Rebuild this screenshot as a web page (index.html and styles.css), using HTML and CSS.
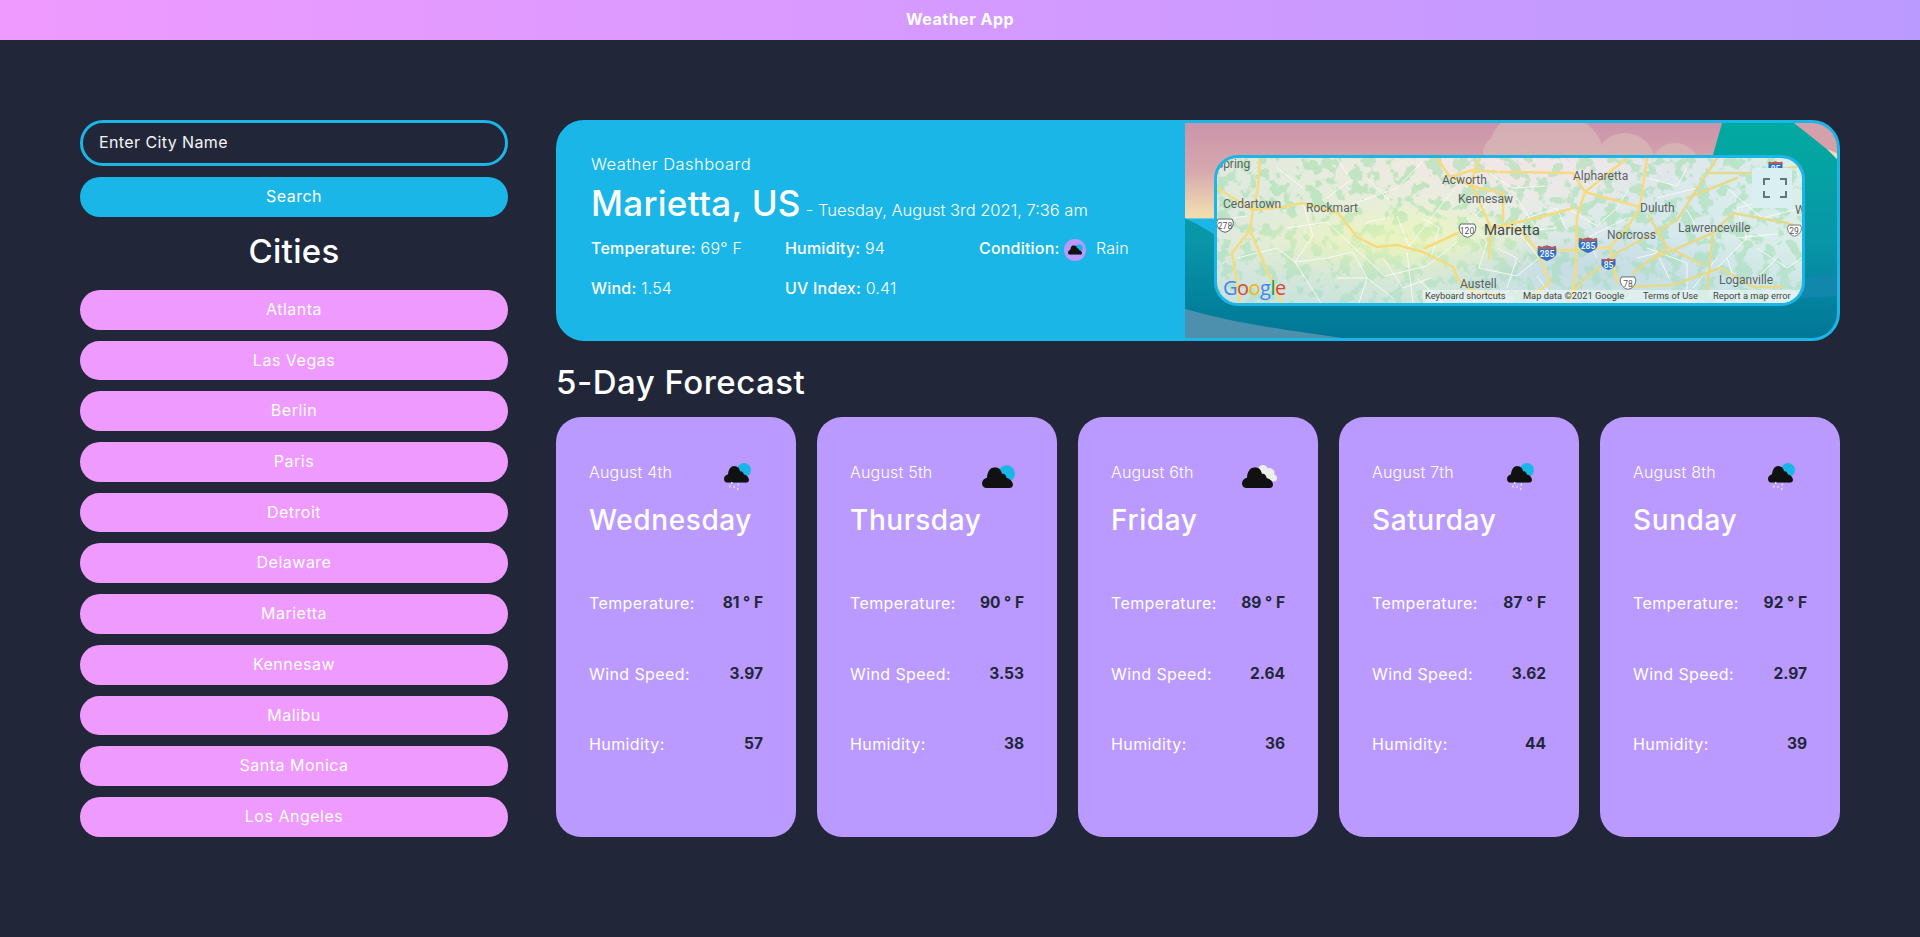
FILE: index.html
```html
<!DOCTYPE html>
<html lang="en">
<head>
  <meta charset="UTF-8">
  <title>Weather App</title>
  <link rel="stylesheet" href="styles.css">
</head>
<body>
  <svg class="defs" width="0" height="0" aria-hidden="true">
    <defs>
      <symbol id="cloud" viewBox="0 0 93 62" preserveAspectRatio="none">
        <path d="M12 62C5 62 0 55 0 48 0 40 6 33 15 31 16 12 26 0 38 0 50 0 58 8 60 20 66 17 72 22 74 32 82 33 93 42 93 52 93 58 88 62 82 62Z" fill="#111"/>
      </symbol>
      <symbol id="interstate" viewBox="0 0 20 16">
        <path d="M1 1 5 2 10 .5 15 2 19 1 19.500 8C19.500 12 14 14.500 10 16 6 14.500 .5 12 .5 8Z" fill="#2f72c4"/>
        <path d="M1 1 5 2 10 .5 15 2 19 1 19.300 4H.7Z" fill="#b9575a"/>
      </symbol>
      <symbol id="ushwy" viewBox="0 0 18 15">
        <path d="M2 1H16L17.300 4C17.500 8 15 13 9 14.300 3 13 .5 8 .7 4Z" fill="#fff" stroke="#5c6468"/>
      </symbol>
      <filter id="patches" x="0" y="0" width="100%" height="100%" color-interpolation-filters="sRGB">
        <feTurbulence type="fractalNoise" baseFrequency="0.075" numOctaves="3" seed="7"/>
        <feColorMatrix values="0 0 0 0 .6  0 0 0 0 .87  0 0 0 0 .66  14 0 0 0 -7.300"/>
      </filter>
      <radialGradient id="map-pink" cx=".5" cy=".02" r=".42">
        <stop offset="0" stop-color="#f3e6e8"/>
        <stop offset="1" stop-color="#f3e6e8" stop-opacity="0"/>
      </radialGradient>
      <radialGradient id="map-yellow" cx=".3" cy=".6" r=".3">
        <stop offset="0" stop-color="#eef7b0" stop-opacity=".7"/>
        <stop offset="1" stop-color="#eef7b0" stop-opacity="0"/>
      </radialGradient>
      <radialGradient id="map-urban" cx=".62" cy=".75" r=".3">
        <stop offset="0" stop-color="#c8dbe6" stop-opacity=".9"/>
        <stop offset="1" stop-color="#c8dbe6" stop-opacity="0"/>
      </radialGradient>
      <linearGradient id="map-base" x1="0" y1="0" x2="1" y2="0">
        <stop offset="0" stop-color="#dfe9df"/>
        <stop offset=".35" stop-color="#e8f0d6"/>
        <stop offset=".55" stop-color="#e4ece6"/>
        <stop offset=".75" stop-color="#d6e8ec"/>
        <stop offset="1" stop-color="#dceeea"/>
      </linearGradient>
      <linearGradient id="map-blue" x1="0" y1="0" x2="0" y2="1">
        <stop offset=".55" stop-color="#b6dcdc" stop-opacity="0"/>
        <stop offset="1" stop-color="#b6dcdc" stop-opacity=".55"/>
      </linearGradient>
      <linearGradient id="art-sky" x1="0" y1="0" x2="0" y2="1">
        <stop offset="0" stop-color="#cb94aa"/>
        <stop offset=".5" stop-color="#d6a8ae"/>
        <stop offset=".95" stop-color="#f0dcb0"/>
      </linearGradient>
      <linearGradient id="art-teal" x1="0" y1="0" x2="0" y2="1">
        <stop offset="0" stop-color="#02aaa0"/>
        <stop offset=".55" stop-color="#0896a8"/>
        <stop offset="1" stop-color="#007696"/>
      </linearGradient>
    </defs>
  </svg>

  <header class="app-header">Weather App</header>

  <main class="layout">
    <aside class="sidebar">
      <input class="city-input" type="text" placeholder="Enter City Name">
      <button class="search-btn">Search</button>
      <h2 class="cities-title">Cities</h2>
      <ul class="city-list">
        <li class="city">Atlanta</li>
        <li class="city">Las Vegas</li>
        <li class="city">Berlin</li>
        <li class="city">Paris</li>
        <li class="city">Detroit</li>
        <li class="city">Delaware</li>
        <li class="city">Marietta</li>
        <li class="city">Kennesaw</li>
        <li class="city">Malibu</li>
        <li class="city">Santa Monica</li>
        <li class="city">Los Angeles</li>
      </ul>
    </aside>

    <section class="content">
      <div class="hero">
        <div class="hero-info">
          <p class="hero-label">Weather Dashboard</p>
          <h1 class="hero-city">Marietta, US<small class="hero-date">- Tuesday, August 3rd 2021, 7:36 am</small></h1>
          <div class="hero-stats">
            <p class="stat"><b>Temperature:</b> 69° F</p>
            <p class="stat"><b>Humidity:</b> 94</p>
            <p class="stat"><b>Condition:</b>
              <span class="cond-icon"><svg width="15" height="11" viewBox="0 0 33 23"><circle cx="24" cy="8.500" r="8.300" fill="#1bb6e8"/><use href="#cloud" y="2.300" width="31" height="20.700"/></svg></span>
              Rain</p>
            <p class="stat"><b>Wind:</b> 1.54</p>
            <p class="stat"><b>UV Index:</b> 0.41</p>
          </div>
        </div>

        <div class="hero-visual">
          <svg class="hero-art" viewBox="0 0 652 214" preserveAspectRatio="none" aria-hidden="true">
            <rect width="652" height="95" fill="url(#art-sky)"/>
            <g fill="#dcc2bc" opacity=".55">
              <circle cx="345" cy="30" r="42"/>
              <circle cx="380" cy="32" r="38"/>
              <circle cx="315" cy="30" r="17"/>
              <circle cx="440" cy="40" r="30"/>
              <circle cx="490" cy="45" r="25"/>
            </g>
            <path d="M0 95C12 100 22 106 40 118L520 60 537 0H652V214H0Z" fill="url(#art-teal)"/>
            <path d="M609 0 652 34V0Z" fill="#d4a0ac"/>
            <path d="M642 26 652 36V30Z" fill="#f0dcb0"/>
            <path d="M0 185C50 200 110 207 157 214H0Z" fill="#4d90ad"/>
            <path d="M560 170C590 160 630 150 652 150V172C620 175 590 175 560 170Z" fill="#1187ad"/>
          </svg>

          <svg class="map" viewBox="0 0 585 145">
            <rect width="585" height="145" fill="url(#map-base)"/>
            <rect width="585" height="145" fill="url(#map-pink)"/>
            <rect width="585" height="145" fill="url(#map-urban)"/>
            <rect width="585" height="145" filter="url(#patches)" opacity=".5"/>
            <rect width="585" height="145" fill="url(#map-yellow)"/>
            <rect width="585" height="145" fill="url(#map-blue)"/>

            <!-- minor roads -->
            <g fill="none" stroke="#fbfbf4" stroke-width="1" opacity=".9">
              <path d="M70 70 110 64 140 92 168 118 210 108 240 84M136 46 180 30 205 4M150 120 142 145M190 94 196 145M180 58 192 88 222 50 238 30"/>
              <path d="M86 45 96 78 78 104 110 100 136 94 150 120M20 100 60 90 78 104 104 145M200 120 226 145M172 60 150 64 146 70"/>
              <path d="M250 60 270 84 262 110 300 118 322 100 300 72M276 40 258 58M320 118 340 145M268 12 295 30 328 28"/>
              <path d="M430 90 470 105 470 145M440 40 480 30M500 110 530 80 520 50 560 40M520 130 510 100M350 50 380 68 400 50 412 30M452 120 440 95 420 100M540 90 570 110 585 100"/>
              <path d="M120 0 134 22 110 40M60 10 86 30M0 62 30 58M150 20 172 42M205 60 222 70 214 100M166 100 186 130 214 120M120 120 150 120 176 140"/>
              <path d="M280 90 300 100 290 130M310 60 340 50 350 72M300 40 320 72 340 70M380 100 370 80 410 60M430 20 460 28 470 10M480 70 470 52M510 30 545 60 585 50M540 120 560 100M520 80 560 76M476 130 500 100"/>
            </g>

            <!-- highways -->
            <g fill="none" stroke="#f5db80" stroke-width="2.500" stroke-linejoin="round" stroke-linecap="round">
              <path d="M65 49 86 45 121 55 140 79 160 89 180 87 206 94 236 109 241 122 260 135 283 137"/>
              <path d="M208 90 241 75M0 30 36 52 65 49M36 52 33 72 51 115 65 145M33 72 15 95 23 145M43 0 41 30 36 52"/>
              <path d="M220 0 233 19 262 30 286 35 286 62M283 14 356 15 368 34 410 0M368 34 360 59 358 122 352 145"/>
              <path d="M233 19 256 12 280 14M262 0 254 25 274 70 272 100M303 72 320 92 360 92 393 89 400 125M290 69 303 72M320 92 333 125 313 139"/>
              <path d="M368 34 423 49 430 0M423 49 410 70 393 89M274 70 320 60 356 50"/>
            </g>
            <g fill="none" stroke="#e6d98b" stroke-width="2.500" stroke-linejoin="round" stroke-linecap="round">
              <path d="M500 0 460 62 400 95 366 122 350 145M490 15 536 15 585 8M416 115 450 89 486 107"/>
              <path d="M496 75 490 132M433 102 496 75 516 55 570 65 585 70M413 129 456 127 503 110 536 129 566 129"/>
              <path d="M450 89 432 58M470 40 520 20"/>
            </g>

            <!-- town labels -->
            <g class="map-label">
              <text x="-1" y="10">Spring</text>
              <text x="6" y="50">Cedartown</text>
              <text x="89" y="54">Rockmart</text>
              <text x="225" y="26">Acworth</text>
              <text x="241" y="45">Kennesaw</text>
              <text x="243" y="130">Austell</text>
              <text x="356" y="22">Alpharetta</text>
              <text x="423" y="54">Duluth</text>
              <text x="390" y="81">Norcross</text>
              <text x="461" y="74">Lawrenceville</text>
              <text x="502" y="126">Loganville</text>
              <text x="578" y="56">W</text>
              <text class="map-city" x="267" y="77">Marietta</text>
            </g>

            <!-- road shields -->
            <use href="#ushwy" x="-1" y="60" width="18" height="15"/>
            <use href="#ushwy" x="240" y="65" width="21" height="15"/>
            <use href="#ushwy" x="402" y="118" width="18" height="14"/>
            <use href="#ushwy" x="570" y="65" width="15" height="15"/>
            <use href="#interstate" x="320" y="87" width="20" height="16"/>
            <use href="#interstate" x="361" y="79" width="20" height="16"/>
            <use href="#interstate" x="384" y="98" width="15" height="16"/>
            <use href="#interstate" x="551" y="2" width="15" height="14"/>
            <g class="shield-num">
              <text x="8" y="71">278</text>
              <text x="250" y="76">120</text>
              <text x="411" y="129">78</text>
              <text x="577" y="76">29</text>
            </g>
            <g class="shield-num shield-white">
              <text x="330" y="99">285</text>
              <text x="371" y="91">285</text>
              <text x="391.500" y="110">85</text>
              <text x="558.500" y="14">85</text>
            </g>

            <!-- controls -->
            <rect x="535" y="10" width="40" height="40" rx="2" fill="#d9eff2"/>
            <path d="M547 27V21H553M563 21H569V27M569 33V39H563M553 39H547V33" fill="none" stroke="#5f7880" stroke-width="2"/>

            <rect x="206" y="132" width="379" height="13" fill="#fff" opacity=".45"/>
            <g class="map-attr">
              <text x="208" y="141">Keyboard shortcuts</text>
              <text x="306" y="141">Map data ©2021 Google</text>
              <text x="426" y="141">Terms of Use</text>
              <text x="496" y="141">Report a map error</text>
            </g>
            <text class="map-logo" x="6" y="137"><tspan fill="#4285f4">G</tspan><tspan fill="#db4437">o</tspan><tspan fill="#f4b400">o</tspan><tspan fill="#4285f4">g</tspan><tspan fill="#0f9d58">l</tspan><tspan fill="#db4437">e</tspan></text>
          </svg>
        </div>
      </div>

      <h2 class="forecast-title">5-Day Forecast</h2>

      <div class="forecast">
        <article class="card">
          <div class="card-top">
            <span class="card-date">August 4th</span>
            <svg class="icon icon-rain" viewBox="0 0 30 30"><circle cx="21" cy="7" r="7" fill="#1bb6e8"/><use href="#cloud" x="1" y="3" width="25" height="16.700"/><path d="M9 19 8.500 21M7.200 22.500 6.700 24.500M11.300 22.800 10.800 24.800M15.500 20.500 15 22.500M15 25 14.500 27" stroke="#ece6f8" stroke-width="1.300" fill="none"/></svg>
          </div>
          <h3 class="card-day">Wednesday</h3>
          <dl class="card-rows">
            <div class="card-row"><dt>Temperature:</dt><dd>81 ° F</dd></div>
            <div class="card-row"><dt>Wind Speed:</dt><dd>3.97</dd></div>
            <div class="card-row"><dt>Humidity:</dt><dd>57</dd></div>
          </dl>
        </article>

        <article class="card">
          <div class="card-top">
            <span class="card-date">August 5th</span>
            <svg class="icon icon-cloud" viewBox="0 0 33 23"><circle cx="24.700" cy="8.500" r="8.300" fill="#1bb6e8"/><use href="#cloud" y="2.300" width="31" height="20.700"/></svg>
          </div>
          <h3 class="card-day">Thursday</h3>
          <dl class="card-rows">
            <div class="card-row"><dt>Temperature:</dt><dd>90 ° F</dd></div>
            <div class="card-row"><dt>Wind Speed:</dt><dd>3.53</dd></div>
            <div class="card-row"><dt>Humidity:</dt><dd>38</dd></div>
          </dl>
        </article>

        <article class="card">
          <div class="card-top">
            <span class="card-date">August 6th</span>
            <svg class="icon icon-cloudy" viewBox="0 0 35 23"><g fill="#efefea"><circle cx="21" cy="5" r="5"/><circle cx="27.500" cy="8" r="5"/><circle cx="31.500" cy="13" r="3.500"/><circle cx="25" cy="12" r="5"/></g><use href="#cloud" y="2.300" width="31" height="20.700"/></svg>
          </div>
          <h3 class="card-day">Friday</h3>
          <dl class="card-rows">
            <div class="card-row"><dt>Temperature:</dt><dd>89 ° F</dd></div>
            <div class="card-row"><dt>Wind Speed:</dt><dd>2.64</dd></div>
            <div class="card-row"><dt>Humidity:</dt><dd>36</dd></div>
          </dl>
        </article>

        <article class="card">
          <div class="card-top">
            <span class="card-date">August 7th</span>
            <svg class="icon icon-rain" viewBox="0 0 30 30"><circle cx="21" cy="7" r="7" fill="#1bb6e8"/><use href="#cloud" x="1" y="3" width="25" height="16.700"/><path d="M9 19 8.500 21M7.200 22.500 6.700 24.500M11.300 22.800 10.800 24.800M15.500 20.500 15 22.500M15 25 14.500 27" stroke="#ece6f8" stroke-width="1.300" fill="none"/></svg>
          </div>
          <h3 class="card-day">Saturday</h3>
          <dl class="card-rows">
            <div class="card-row"><dt>Temperature:</dt><dd>87 ° F</dd></div>
            <div class="card-row"><dt>Wind Speed:</dt><dd>3.62</dd></div>
            <div class="card-row"><dt>Humidity:</dt><dd>44</dd></div>
          </dl>
        </article>

        <article class="card">
          <div class="card-top">
            <span class="card-date">August 8th</span>
            <svg class="icon icon-rain" viewBox="0 0 30 30"><circle cx="21" cy="7" r="7" fill="#1bb6e8"/><use href="#cloud" x="1" y="3" width="25" height="16.700"/><path d="M9 19 8.500 21M7.200 22.500 6.700 24.500M11.300 22.800 10.800 24.800M15.500 20.500 15 22.500M15 25 14.500 27" stroke="#ece6f8" stroke-width="1.300" fill="none"/></svg>
          </div>
          <h3 class="card-day">Sunday</h3>
          <dl class="card-rows">
            <div class="card-row"><dt>Temperature:</dt><dd>92 ° F</dd></div>
            <div class="card-row"><dt>Wind Speed:</dt><dd>2.97</dd></div>
            <div class="card-row"><dt>Humidity:</dt><dd>39</dd></div>
          </dl>
        </article>
      </div>
    </section>
  </main>
</body>
</html>
```

FILE: styles.css
```css
* { box-sizing: border-box; }
body {
  margin: 0;
  min-height: 937px;
  background: #212739;
  color: #fff;
  font-family: Inter, "Open Sans", sans-serif;
}
h1, h2, h3, p, ul, dl, dd { margin: 0; padding: 0; }
.defs { position: absolute; }

.app-header {
  height: 40px;
  line-height: 39px;
  text-align: center;
  font-size: 16px;
  font-weight: 700;
  letter-spacing: .5px;
  background: linear-gradient(90deg, #ef9aff, #bb9aff);
}

.layout {
  display: grid;
  grid-template-columns: 428px 1284px;
  column-gap: 48px;
  padding: 80px 80px 0;
}

/* sidebar */
.sidebar { display: flex; flex-direction: column; }
.city-input {
  height: 46px;
  padding: 0 16px 2px;
  border: 3px solid #1bb6e8;
  border-radius: 23px;
  background: #212739;
  color: #fff;
  font: 400 16px Inter, sans-serif;
  letter-spacing: .4px;
  outline: none;
}
.city-input::placeholder { color: #f4f4f6; opacity: 1; }
.search-btn {
  height: 40px;
  margin-top: 11px;
  padding-bottom: 3px;
  border: 0;
  border-radius: 20px;
  background: #1bb6e8;
  color: #fff;
  font: 400 16px Inter, sans-serif;
  letter-spacing: .5px;
}
.cities-title {
  height: 73px;
  line-height: 69px;
  text-align: center;
  font-size: 33px;
  font-weight: 500;
  letter-spacing: .3px;
}
.city-list { list-style: none; display: flex; flex-direction: column; gap: 11px; }
.city {
  height: 39.700px;
  line-height: 38.500px;
  border-radius: 20px;
  background: #ef9aff;
  text-align: center;
  font-size: 16px;
  font-weight: 400;
  letter-spacing: .5px;
}

/* current weather */
.hero {
  display: flex;
  height: 221px;
  border: 3px solid #1bb6e8;
  border-radius: 28px;
  background: #1bb6e8;
  overflow: hidden;
}
.hero-info { width: 626px; padding: 31px 0 0 32px; }
.hero-label { font-size: 16.500px; font-weight: 300; line-height: 20px; letter-spacing: .45px; }
.hero-city { font-size: 35px; font-weight: 500; line-height: 50px; margin-top: 4px; white-space: nowrap; letter-spacing: .3px; }
.hero-date { margin-left: 5px; font-size: 16.500px; font-weight: 300; letter-spacing: 0; }
.hero-stats {
  display: grid;
  grid-template-columns: 194px 194px 194px;
  grid-auto-rows: 40px;
  margin-top: -1px;
  font-size: 16px;
  font-weight: 300;
  letter-spacing: .2px;
}
.stat { line-height: 28px; white-space: nowrap; }
.stat b { font-weight: 500; }
.cond-icon {
  display: inline-flex;
  align-items: center;
  justify-content: center;
  width: 22px;
  height: 22px;
  margin: 0 5px 0 0;
  border-radius: 50%;
  background: #bb9aff;
  vertical-align: middle;
}

.hero-visual {
  position: relative;
  flex: 1;
  display: flex;
  align-items: center;
  padding-left: 29px;
}
.hero-art { position: absolute; left: 0; top: 0; width: 100%; height: 100%; }
.map {
  position: relative;
  display: block;
  width: 591px;
  height: 151px;
  border: 3px solid #1bb6e8;
  border-radius: 24px;
}
.map-label text { font: 12px Roboto, sans-serif; fill: #5c6368; }
.map-label .map-city { font-size: 15px; fill: #444a4f; }
.shield-num text { font: 8.500px Roboto, sans-serif; fill: #555; text-anchor: middle; }
.shield-white text { fill: #fff; font-weight: 500; }
.map-attr text { font: 9.300px Roboto, sans-serif; fill: #444; }
.map-logo { font: 500 20px "Open Sans", sans-serif; letter-spacing: -.5px; }

/* forecast */
.forecast-title {
  height: 76px;
  line-height: 82px;
  font-size: 33px;
  font-weight: 500;
  letter-spacing: .5px;
}
.forecast { display: flex; gap: 21px; }
.card {
  width: 240px;
  height: 420px;
  padding: 45px 33px 0;
  border-radius: 25px;
  background: #bb9aff;
}
.card-top { display: flex; justify-content: space-between; align-items: flex-start; height: 24px; }
.card-date { font-size: 16px; font-weight: 300; letter-spacing: .2px; }
.icon { display: block; margin-top: 1px; }
.icon-rain { width: 30px; height: 30px; margin-right: 10px; }
.icon-cloud { width: 33px; height: 23px; margin-top: 3px; margin-right: 9px; }
.icon-cloudy { width: 35px; height: 23px; margin-top: 3px; margin-right: 8px; }
.card-day { margin-top: 13px; line-height: 42px; font-size: 28px; font-weight: 500; letter-spacing: .6px; }
.card-rows { margin-top: 50px; }
.card-row {
  display: flex;
  justify-content: space-between;
  height: 70.500px;
  line-height: 24px;
  font-size: 16px;
  letter-spacing: .4px;
}
.card-row dd { font-size: 15.500px; font-weight: 700; letter-spacing: 0; color: #212739; }
```
